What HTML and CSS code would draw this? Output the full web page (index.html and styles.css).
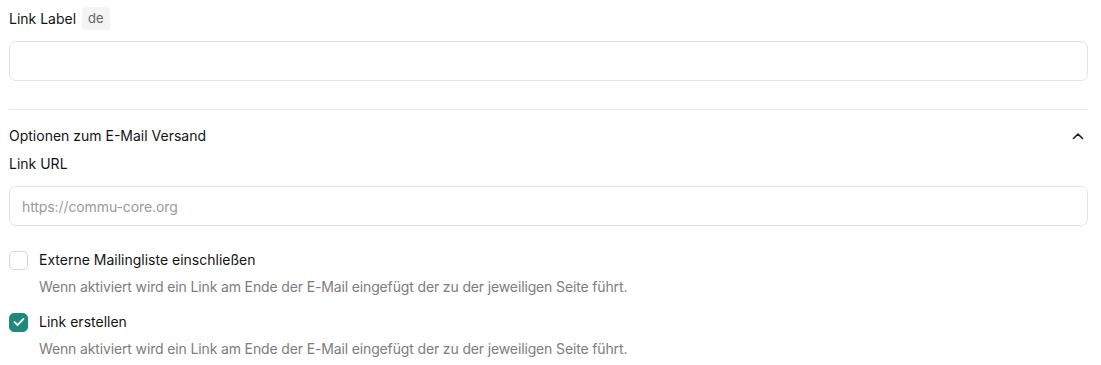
FILE: index.html
```html
<!DOCTYPE html>
<html lang="de">
<head>
<meta charset="utf-8">
<link rel="stylesheet" href="styles.css">
</head>
<body>
<div class="page">
  <div class="label-row">
    <span class="label">Link Label</span>
    <span class="badge">de</span>
  </div>
  <div class="input input-first"></div>
  <hr class="divider">
  <div class="section-head">
    <span class="section-title">Optionen zum E-Mail Versand</span>
    <svg class="chevron" width="12" height="8" viewBox="0 0 12 8"><path d="M1.5 6.5 L6 2 L10.5 6.5" fill="none" stroke="#1f1f1f" stroke-width="1.6" stroke-linecap="round" stroke-linejoin="round"/></svg>
  </div>
  <div class="label url-label">Link URL</div>
  <div class="input input-url"><span class="placeholder">https://commu-core.org</span></div>
  <div class="check-row first-check">
    <span class="box"></span>
    <span class="check-label">Externe Mailingliste einschließen</span>
  </div>
  <div class="desc">Wenn aktiviert wird ein Link am Ende der E-Mail eingefügt der zu der jeweiligen Seite führt.</div>
  <div class="check-row second-check">
    <span class="box checked"><svg width="12" height="10" viewBox="0 0 12 10"><path d="M1.5 5.2 L4.5 8 L10.5 1.8" fill="none" stroke="#fff" stroke-width="1.8" stroke-linecap="round" stroke-linejoin="round"/></svg></span>
    <span class="check-label">Link erstellen</span>
  </div>
  <div class="desc">Wenn aktiviert wird ein Link am Ende der E-Mail eingefügt der zu der jeweiligen Seite führt.</div>
</div>
</body>
</html>
```
FILE: styles.css
```css
* { box-sizing: border-box; }
html, body { margin: 0; padding: 0; background: #fff; }
body {
  font-family: Inter, "Noto Sans", sans-serif;
  font-size: 14px;
  color: #141414;
}
.page {
  width: 1088px;
  padding: 7px 0 0 9px;
  display: flex;
  flex-direction: column;
}
.label-row {
  display: flex;
  align-items: center;
  height: 23px;
}
.label { line-height: 20px; }
.badge {
  margin-left: 6px;
  height: 23px;
  line-height: 23px;
  padding: 0 6px;
  font-size: 13px;
  color: #666;
  background: #f4f4f4;
  border-radius: 3px;
}
.input {
  height: 40px;
  border: 1px solid #e3e3e3;
  border-radius: 7px;
  display: flex;
  align-items: center;
  padding: 0 12px;
}
.input-first { margin-top: 11px; }
.placeholder { color: #9a9a9a; letter-spacing: -0.1px; }
.divider {
  margin: 28px 0 0 0;
  border: 0;
  border-top: 1px solid #e7e7e7;
  height: 0;
}
.section-head {
  margin-top: 16px;
  height: 20px;
  display: flex;
  align-items: center;
  justify-content: space-between;
}
.section-title { line-height: 20px; }
.chevron { margin-right: 4px; }
.url-label { margin-top: 8px; }
.input-url { margin-top: 12px; }
.check-row {
  display: flex;
  align-items: center;
  height: 20px;
}
.first-check { margin-top: 24px; }
.second-check { margin-top: 15px; }
.box {
  width: 19px;
  height: 19px;
  border: 1px solid #d6d6d6;
  border-radius: 5px;
  display: flex;
  align-items: center;
  justify-content: center;
  flex: none;
}
.box.checked {
  background: #1d8a7b;
  border-color: #1d8a7b;
}
.check-label {
  margin-left: 11px;
  line-height: 20px;
}
.desc {
  margin-top: 7px;
  margin-left: 30px;
  line-height: 20px;
  color: #7d7d7d;
  letter-spacing: -0.14px;
}
```
